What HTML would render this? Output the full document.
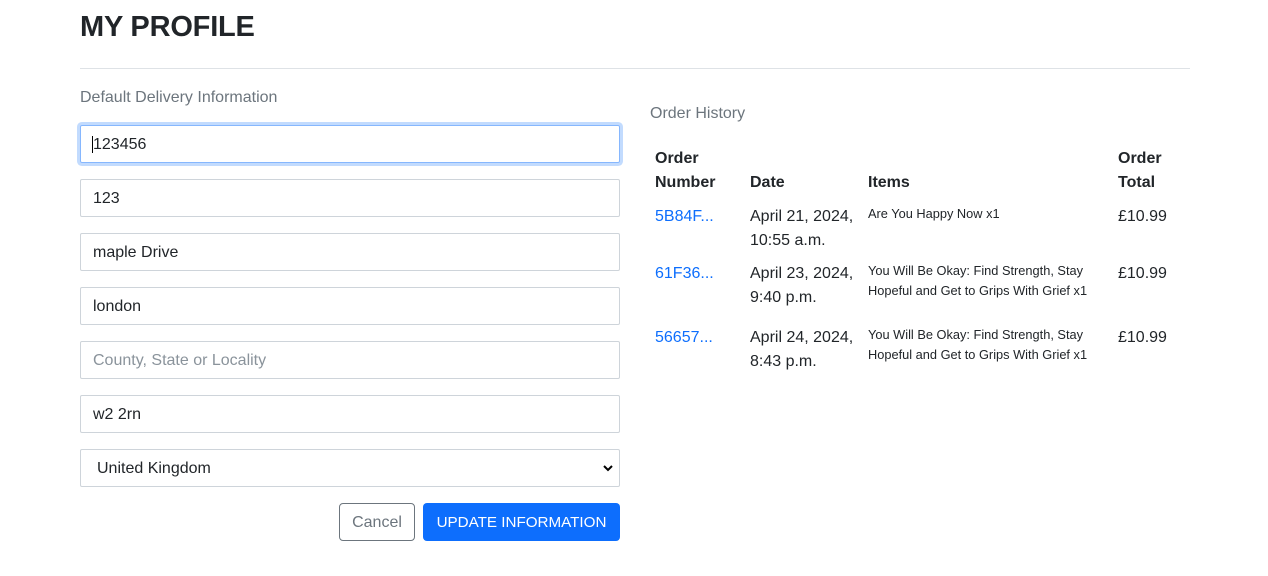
<!DOCTYPE html>
<html><head><meta charset="utf-8"><style>
*{box-sizing:border-box;margin:0;padding:0}
body{width:1268px;height:576px;background:#fff;font-family:"Liberation Sans",sans-serif;color:#212529;position:relative;overflow:hidden;font-size:16px}
.a{position:absolute;white-space:nowrap}
h1{position:absolute;left:80px;top:7px;font-size:29px;font-weight:bold;line-height:40px;color:#212529;letter-spacing:-0.2px}
hr{position:absolute;left:80px;top:68px;width:1110px;border:0;border-top:1px solid #dee2e6}
.lbl{color:#6c757d;font-size:16px;line-height:24px}
.in{position:absolute;left:80px;width:540px;height:38px;border:1px solid #ced4da;border-radius:2px;padding:0 12px;line-height:38px;font-size:16px;color:#212529}
.ph{color:#8a939b}
.b{font-weight:bold;line-height:24px}
.t{line-height:24px}
.s{font-size:12.8px;line-height:20px}
.lnk{color:#0d6efd;line-height:24px}
</style></head><body>
<h1>MY PROFILE</h1>
<hr>
<div class="a lbl" style="left:80px;top:86px">Default Delivery Information</div>
<div class="in" style="top:125px;border-color:#86b7fe;box-shadow:0 0 0 3px rgba(13,110,253,.25)"><span style="border-left:1px solid #000;margin-left:-1px"></span>123456</div>
<div class="in" style="top:179px">123</div>
<div class="in" style="top:233px">maple Drive</div>
<div class="in" style="top:287px">london</div>
<div class="in ph" style="top:341px">County, State or Locality</div>
<div class="in" style="top:395px">w2 2rn</div>
<div class="in" style="top:449px;padding-left:16px">United Kingdom
<svg style="position:absolute;right:6px;top:14px" width="10" height="8" viewBox="0 0 10 8"><path d="M1 2l4 4 4-4" stroke="#000" stroke-width="2" fill="none"/></svg></div>
<div class="a" style="left:339px;top:503px;width:76px;height:38px;border:1px solid #6c757d;border-radius:4px;color:#6c757d;text-align:center;line-height:38px">Cancel</div>
<div class="a" style="left:423px;top:503px;width:197px;height:38px;background:#0d6efd;border-radius:4px;color:#fff;text-align:center;line-height:40px;font-size:15.2px">UPDATE INFORMATION</div>

<div class="a lbl" style="left:650px;top:102px">Order History</div>
<div class="a b" style="left:655px;top:147px">Order<br>Number</div>
<div class="a b" style="left:750px;top:171px">Date</div>
<div class="a b" style="left:868px;top:171px">Items</div>
<div class="a b" style="left:1118px;top:147px">Order<br>Total</div>

<div class="a lnk" style="left:655px;top:205px">5B84F...</div>
<div class="a t" style="left:750px;top:205px">April 21, 2024,<br>10:55 a.m.</div>
<div class="a s" style="left:868px;top:204px">Are You Happy Now x1</div>
<div class="a t" style="left:1118px;top:205px">£10.99</div>

<div class="a lnk" style="left:655px;top:262px">61F36...</div>
<div class="a t" style="left:750px;top:262px">April 23, 2024,<br>9:40 p.m.</div>
<div class="a s" style="left:868px;top:261px">You Will Be Okay: Find Strength, Stay<br>Hopeful and Get to Grips With Grief x1</div>
<div class="a t" style="left:1118px;top:262px">£10.99</div>

<div class="a lnk" style="left:655px;top:326px">56657...</div>
<div class="a t" style="left:750px;top:326px">April 24, 2024,<br>8:43 p.m.</div>
<div class="a s" style="left:868px;top:325px">You Will Be Okay: Find Strength, Stay<br>Hopeful and Get to Grips With Grief x1</div>
<div class="a t" style="left:1118px;top:326px">£10.99</div>
</body></html>
